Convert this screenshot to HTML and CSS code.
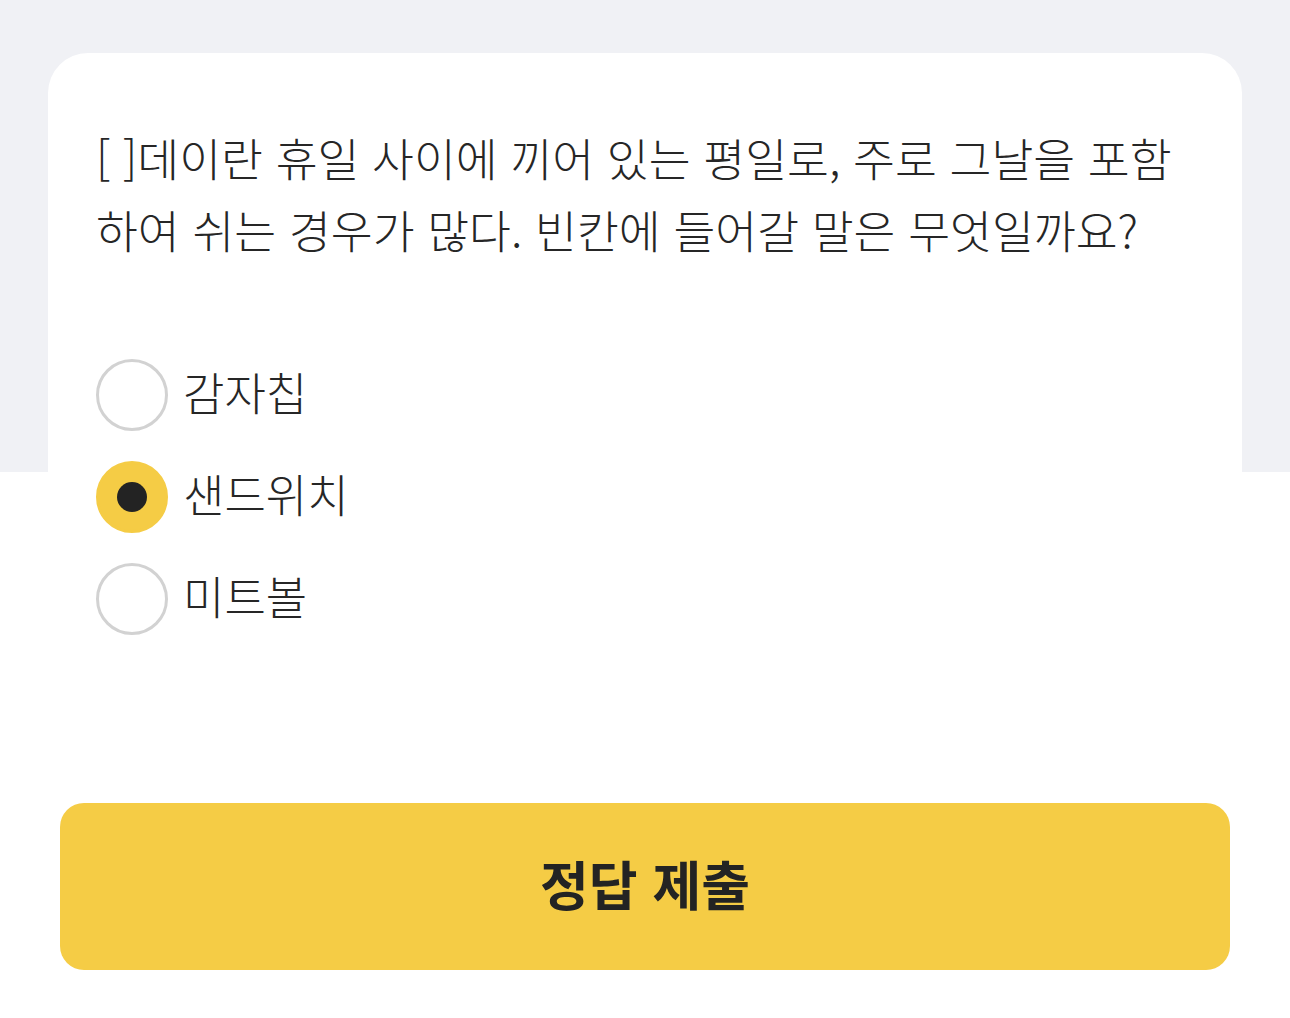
FILE: index.html
```html
<!DOCTYPE html>
<html lang="ko">
<head>
<meta charset="utf-8">
<link rel="stylesheet" href="styles.css">
</head>
<body>
<main class="page">
  <section class="card">
    <p class="question">[ ]데이란 휴일 사이에 끼어 있는 평일로, 주로 그날을 포함하여 쉬는 경우가 많다. 빈칸에 들어갈 말은 무엇일까요?</p>
    <ul class="options">
      <li class="option"><span class="radio"></span><span class="label">감자칩</span></li>
      <li class="option selected"><span class="radio"><span class="dot"></span></span><span class="label">샌드위치</span></li>
      <li class="option"><span class="radio"></span><span class="label">미트볼</span></li>
    </ul>
  </section>
  <div class="actions">
    <button class="submit">정답 제출</button>
  </div>
</main>
</body>
</html>
```
FILE: styles.css
```css
* { box-sizing: border-box; }
html, body { margin: 0; padding: 0; }
body {
  width: 1290px;
  height: 1018px;
  overflow: hidden;
  background: linear-gradient(#f0f1f5 0, #f0f1f5 472px, #ffffff 472px);
  font-family: "Noto Sans CJK KR", "Noto Sans", sans-serif;
  color: #2b2b2b;
}
.page {
  padding-top: 53px;
}
.card {
  margin: 0 48px;
  background: #ffffff;
  border-radius: 40px 40px 0 0;
  padding: 68px 48px 0 48px;
  height: 680px;
}
.question {
  margin: 0;
  font-size: 45.5px;
  line-height: 72px;
  font-weight: 300;
  letter-spacing: 0;
  word-break: normal;
  color: #262626;
}
.options {
  list-style: none;
  margin: 94px 0 0 0;
  padding: 0;
  display: flex;
  flex-direction: column;
  gap: 30px;
}
.option {
  display: flex;
  align-items: center;
  gap: 15px;
  height: 72px;
}
.radio {
  width: 72px;
  height: 72px;
  border-radius: 50%;
  border: 3px solid #d2d2d2;
  display: flex;
  align-items: center;
  justify-content: center;
  flex: none;
}
.option.selected .radio {
  border-color: #f5cc45;
  background: #f5cc45;
}
.dot {
  width: 30px;
  height: 30px;
  border-radius: 50%;
  background: #232323;
}
.label {
  font-size: 45px;
  line-height: 72px;
  font-weight: 300;
  color: #262626;
  padding-bottom: 6px;
}
.actions {
  padding: 70px 60px 0 60px;
}
.submit {
  display: block;
  width: 100%;
  height: 167px;
  border: none;
  border-radius: 24px;
  background: #f5cc45;
  font-family: "Noto Sans CJK KR", "Noto Sans", sans-serif;
  font-size: 53px;
  font-weight: 700;
  color: #232323;
  padding: 0 0 8px 0;
  cursor: pointer;
}
```
